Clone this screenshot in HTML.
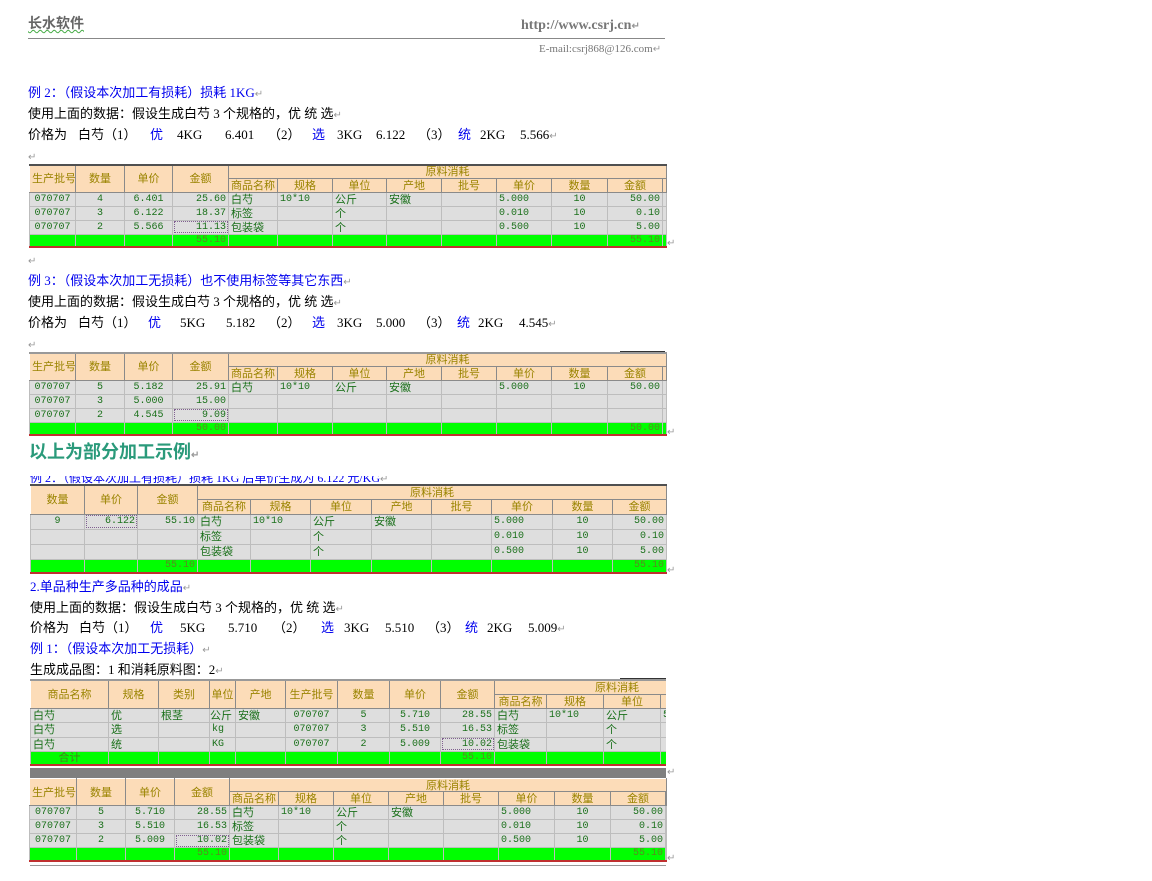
<!DOCTYPE html>
<html><head><meta charset="utf-8">
<style>
body{margin:0;width:1152px;height:881px;background:#fff;position:relative;overflow:hidden;font-family:"Liberation Serif","Noto Sans CJK SC",serif;}
.a{position:absolute;white-space:nowrap;font-size:13px;line-height:15px;color:#000;font-family:"Liberation Serif","Noto Sans CJK SC",serif}
.b{color:#0000ee}
.m{color:#999;font-size:10px}
table.t{position:absolute;border-collapse:collapse;table-layout:fixed;border-top:2px solid #505050;border-bottom:2px solid #c03030;font-family:"Liberation Mono","Noto Sans CJK SC",monospace;font-size:10px;}
table.t td{padding:0 2px;line-height:11px;white-space:nowrap;overflow:hidden;border:1px solid #bdbdbd;}
.h{background:#fcdcb8;color:#9a8400;text-align:center;font-family:"Noto Sans CJK SC",sans-serif;font-size:11px;border-color:#fff #8a8a8a #8a8a8a #fff!important}
.d{background:#dedede;color:#1a701a}
.g{background:#00ff00;color:#5a8a20;text-align:right}
.c{text-align:center}.r{text-align:right}
.s{outline:1px dotted #806090;outline-offset:-2px}
.cj{font-family:"Noto Sans CJK SC",sans-serif;font-size:11px}
</style></head><body>

<div class="a" style="left:28px;top:16px;font-size:14px;color:#666;font-family:'Noto Sans CJK SC',sans-serif;font-weight:bold;text-decoration:underline wavy #4a4;text-decoration-thickness:1px">长水软件</div>
<div class="a" style="left:521px;top:18px;font-size:14px;color:#777;font-weight:bold">http://www.csrj.cn<span class="m">↵</span></div>
<div style="position:absolute;left:28px;top:38px;width:637px;height:1px;background:#888"></div>
<div class="a" style="left:539px;top:42px;font-size:11px;color:#777">E-mail:csrj868@126.com<span class="m">↵</span></div>

<div class="a b" style="left:28px;top:85px">例 2：（假设本次加工有损耗）损耗 1KG<span class="m">↵</span></div>
<div class="a" style="left:28px;top:106px">使用上面的数据：假设生成白芍 3 个规格的，优 统 选<span class="m">↵</span></div>
<div class="a" style="left:28px;top:127px">价格为</div><div class="a" style="left:78px;top:127px">白芍（1）</div><div class="a b" style="left:150px;top:127px">优</div><div class="a" style="left:177px;top:127px">4KG</div><div class="a" style="left:225px;top:127px">6.401</div><div class="a" style="left:268px;top:127px">（2）</div><div class="a b" style="left:312px;top:127px">选</div><div class="a" style="left:337px;top:127px">3KG</div><div class="a" style="left:376px;top:127px">6.122</div><div class="a" style="left:418px;top:127px">（3）</div><div class="a b" style="left:458px;top:127px">统</div><div class="a" style="left:480px;top:127px">2KG</div><div class="a" style="left:520px;top:127px">5.566<span class="m">↵</span></div>
<div class="a m" style="left:28px;top:150px">↵</div>

<table class="t" style="left:29px;top:164px;width:637px">
<colgroup><col style="width:46px"><col style="width:49px"><col style="width:48px"><col style="width:56px"><col style="width:49px"><col style="width:55px"><col style="width:54px"><col style="width:55px"><col style="width:55px"><col style="width:55px"><col style="width:56px"><col style="width:55px"><col style="width:4px"></colgroup>
<tr style="height:13px"><td class="h" rowspan="2">生产批号</td><td class="h" rowspan="2">数量</td><td class="h" rowspan="2">单价</td><td class="h" rowspan="2">金额</td><td class="h" colspan="9">原料消耗</td></tr>
<tr style="height:14px"><td class="h">商品名称</td><td class="h">规格</td><td class="h">单位</td><td class="h">产地</td><td class="h">批号</td><td class="h">单价</td><td class="h">数量</td><td class="h">金额</td><td class="h"></td></tr>
<tr style="height:14px"><td class="d c">070707</td><td class="d c">4</td><td class="d c">6.401</td><td class="d r">25.60</td><td class="d cj">白芍</td><td class="d">10*10</td><td class="d cj">公斤</td><td class="d cj">安徽</td><td class="d"></td><td class="d">5.000</td><td class="d c">10</td><td class="d r">50.00</td><td class="d"></td></tr>
<tr style="height:14px"><td class="d c">070707</td><td class="d c">3</td><td class="d c">6.122</td><td class="d r">18.37</td><td class="d cj">标签</td><td class="d"></td><td class="d cj">个</td><td class="d"></td><td class="d"></td><td class="d">0.010</td><td class="d c">10</td><td class="d r">0.10</td><td class="d"></td></tr>
<tr style="height:14px"><td class="d c">070707</td><td class="d c">2</td><td class="d c">5.566</td><td class="d r s">11.13</td><td class="d cj">包装袋</td><td class="d"></td><td class="d cj">个</td><td class="d"></td><td class="d"></td><td class="d">0.500</td><td class="d c">10</td><td class="d r">5.00</td><td class="d"></td></tr>
<tr style="height:13px"><td class="g"></td><td class="g"></td><td class="g"></td><td class="g">55.10</td><td class="g"></td><td class="g"></td><td class="g"></td><td class="g"></td><td class="g"></td><td class="g"></td><td class="g"></td><td class="g">55.10</td><td class="g"></td></tr>
</table>
<div class="a m" style="left:667px;top:236px">↵</div>

<div class="a m" style="left:28px;top:254px">↵</div>
<div class="a b" style="left:28px;top:273px">例 3：（假设本次加工无损耗）也不使用标签等其它东西<span class="m">↵</span></div>
<div class="a" style="left:28px;top:294px">使用上面的数据：假设生成白芍 3 个规格的，优 统 选<span class="m">↵</span></div>
<div class="a" style="left:28px;top:315px">价格为</div><div class="a" style="left:78px;top:315px">白芍（1）</div><div class="a b" style="left:148px;top:315px">优</div><div class="a" style="left:180px;top:315px">5KG</div><div class="a" style="left:226px;top:315px">5.182</div><div class="a" style="left:268px;top:315px">（2）</div><div class="a b" style="left:312px;top:315px">选</div><div class="a" style="left:337px;top:315px">3KG</div><div class="a" style="left:376px;top:315px">5.000</div><div class="a" style="left:418px;top:315px">（3）</div><div class="a b" style="left:457px;top:315px">统</div><div class="a" style="left:478px;top:315px">2KG</div><div class="a" style="left:519px;top:315px">4.545<span class="m">↵</span></div>
<div class="a m" style="left:28px;top:338px">↵</div>
<div style="position:absolute;left:620px;top:351px;width:45px;height:2px;background:#333"></div>

<table class="t" style="left:29px;top:352px;width:637px;border-top-color:#999">
<colgroup><col style="width:46px"><col style="width:49px"><col style="width:48px"><col style="width:56px"><col style="width:49px"><col style="width:55px"><col style="width:54px"><col style="width:55px"><col style="width:55px"><col style="width:55px"><col style="width:56px"><col style="width:55px"><col style="width:4px"></colgroup>
<tr style="height:13px"><td class="h" rowspan="2">生产批号</td><td class="h" rowspan="2">数量</td><td class="h" rowspan="2">单价</td><td class="h" rowspan="2">金额</td><td class="h" colspan="9">原料消耗</td></tr>
<tr style="height:14px"><td class="h">商品名称</td><td class="h">规格</td><td class="h">单位</td><td class="h">产地</td><td class="h">批号</td><td class="h">单价</td><td class="h">数量</td><td class="h">金额</td><td class="h"></td></tr>
<tr style="height:14px"><td class="d c">070707</td><td class="d c">5</td><td class="d c">5.182</td><td class="d r">25.91</td><td class="d cj">白芍</td><td class="d">10*10</td><td class="d cj">公斤</td><td class="d cj">安徽</td><td class="d"></td><td class="d">5.000</td><td class="d c">10</td><td class="d r">50.00</td><td class="d"></td></tr>
<tr style="height:14px"><td class="d c">070707</td><td class="d c">3</td><td class="d c">5.000</td><td class="d r">15.00</td><td class="d"></td><td class="d"></td><td class="d"></td><td class="d"></td><td class="d"></td><td class="d"></td><td class="d"></td><td class="d"></td><td class="d"></td></tr>
<tr style="height:14px"><td class="d c">070707</td><td class="d c">2</td><td class="d c">4.545</td><td class="d r s">9.09</td><td class="d"></td><td class="d"></td><td class="d"></td><td class="d"></td><td class="d"></td><td class="d"></td><td class="d"></td><td class="d"></td><td class="d"></td></tr>
<tr style="height:13px"><td class="g"></td><td class="g"></td><td class="g"></td><td class="g">50.00</td><td class="g"></td><td class="g"></td><td class="g"></td><td class="g"></td><td class="g"></td><td class="g"></td><td class="g"></td><td class="g">50.00</td><td class="g"></td></tr>
</table>
<div class="a m" style="left:667px;top:425px">↵</div>

<div class="a" style="left:29px;top:440px;font-size:18px;line-height:22px;font-weight:bold;color:#2a9a7a;font-family:'Noto Sans CJK SC',sans-serif">以上为部分加工示例<span class="m">↵</span></div>
<div style="position:absolute;left:30px;top:476px;width:440px;height:8px;overflow:hidden"><div class="a b" style="left:0;top:-5px;font-size:12px">例 2：（假设本次加工有损耗）损耗 1KG 后单价生成为 6.122 元/KG<span class="m">↵</span></div></div>

<table class="t" style="left:30px;top:484px;width:636px;border-bottom-color:#c03030">
<colgroup><col style="width:54px"><col style="width:53px"><col style="width:60px"><col style="width:53px"><col style="width:60px"><col style="width:61px"><col style="width:60px"><col style="width:60px"><col style="width:61px"><col style="width:60px"><col style="width:54px"></colgroup>
<tr style="height:14px"><td class="h" rowspan="2">数量</td><td class="h" rowspan="2">单价</td><td class="h" rowspan="2">金额</td><td class="h" colspan="8">原料消耗</td></tr>
<tr style="height:15px"><td class="h">商品名称</td><td class="h">规格</td><td class="h">单位</td><td class="h">产地</td><td class="h">批号</td><td class="h">单价</td><td class="h">数量</td><td class="h">金额</td></tr>
<tr style="height:15px"><td class="d c">9</td><td class="d r s">6.122</td><td class="d r">55.10</td><td class="d cj">白芍</td><td class="d">10*10</td><td class="d cj">公斤</td><td class="d cj">安徽</td><td class="d"></td><td class="d">5.000</td><td class="d c">10</td><td class="d r">50.00</td></tr>
<tr style="height:15px"><td class="d"></td><td class="d"></td><td class="d"></td><td class="d cj">标签</td><td class="d"></td><td class="d cj">个</td><td class="d"></td><td class="d"></td><td class="d">0.010</td><td class="d c">10</td><td class="d r">0.10</td></tr>
<tr style="height:15px"><td class="d"></td><td class="d"></td><td class="d"></td><td class="d cj">包装袋</td><td class="d"></td><td class="d cj">个</td><td class="d"></td><td class="d"></td><td class="d">0.500</td><td class="d c">10</td><td class="d r">5.00</td></tr>
<tr style="height:14px"><td class="g"></td><td class="g"></td><td class="g">55.10</td><td class="g"></td><td class="g"></td><td class="g"></td><td class="g"></td><td class="g"></td><td class="g"></td><td class="g"></td><td class="g">55.10</td></tr>
</table>
<div class="a m" style="left:667px;top:563px">↵</div>

<div class="a b" style="left:30px;top:579px">2.单品种生产多品种的成品<span class="m">↵</span></div>
<div class="a" style="left:30px;top:600px">使用上面的数据：假设生成白芍 3 个规格的，优 统 选<span class="m">↵</span></div>
<div class="a" style="left:30px;top:620px">价格为</div><div class="a" style="left:79px;top:620px">白芍（1）</div><div class="a b" style="left:150px;top:620px">优</div><div class="a" style="left:180px;top:620px">5KG</div><div class="a" style="left:228px;top:620px">5.710</div><div class="a" style="left:273px;top:620px">（2）</div><div class="a b" style="left:321px;top:620px">选</div><div class="a" style="left:344px;top:620px">3KG</div><div class="a" style="left:385px;top:620px">5.510</div><div class="a" style="left:427px;top:620px">（3）</div><div class="a b" style="left:465px;top:620px">统</div><div class="a" style="left:487px;top:620px">2KG</div><div class="a" style="left:528px;top:620px">5.009<span class="m">↵</span></div>
<div class="a b" style="left:30px;top:641px">例 1：（假设本次加工无损耗）<span class="m">↵</span></div>
<div class="a" style="left:30px;top:662px">生成成品图：1 和消耗原料图：2<span class="m">↵</span></div>
<div style="position:absolute;left:620px;top:678px;width:46px;height:2px;background:#333"></div>

<div style="position:absolute;left:30px;top:679px;width:636px;height:89px;overflow:hidden">
<table class="t" style="left:0;top:0;width:700px;border-top-color:#999">
<colgroup><col style="width:78px"><col style="width:50px"><col style="width:51px"><col style="width:26px"><col style="width:50px"><col style="width:52px"><col style="width:52px"><col style="width:51px"><col style="width:54px"><col style="width:52px"><col style="width:57px"><col style="width:57px"><col style="width:70px"></colgroup>
<tr style="height:14px"><td class="h" rowspan="2">商品名称</td><td class="h" rowspan="2">规格</td><td class="h" rowspan="2">类别</td><td class="h" rowspan="2" style="padding:0">单位</td><td class="h" rowspan="2">产地</td><td class="h" rowspan="2" style="padding:0">生产批号</td><td class="h" rowspan="2">数量</td><td class="h" rowspan="2">单价</td><td class="h" rowspan="2">金额</td><td class="h" colspan="4" style="text-align:left;padding-left:100px">原料消耗</td></tr>
<tr style="height:14px"><td class="h">商品名称</td><td class="h">规格</td><td class="h">单位</td><td class="h"></td></tr>
<tr style="height:14px"><td class="d cj">白芍</td><td class="d cj">优</td><td class="d cj">根茎</td><td class="d cj" style="padding:0">公斤</td><td class="d cj">安徽</td><td class="d c">070707</td><td class="d c">5</td><td class="d c">5.710</td><td class="d r">28.55</td><td class="d cj">白芍</td><td class="d">10*10</td><td class="d cj">公斤</td><td class="d">5</td></tr>
<tr style="height:15px"><td class="d cj">白芍</td><td class="d cj">选</td><td class="d"></td><td class="d">kg</td><td class="d"></td><td class="d c">070707</td><td class="d c">3</td><td class="d c">5.510</td><td class="d r">16.53</td><td class="d cj">标签</td><td class="d"></td><td class="d cj">个</td><td class="d"></td></tr>
<tr style="height:14px"><td class="d cj">白芍</td><td class="d cj">统</td><td class="d"></td><td class="d">KG</td><td class="d"></td><td class="d c">070707</td><td class="d c">2</td><td class="d c">5.009</td><td class="d r s">10.02</td><td class="d cj">包装袋</td><td class="d"></td><td class="d cj">个</td><td class="d"></td></tr>
<tr style="height:14px"><td class="g c cj" style="text-align:center;color:#4a7a20">合计</td><td class="g"></td><td class="g"></td><td class="g"></td><td class="g"></td><td class="g"></td><td class="g"></td><td class="g"></td><td class="g">55.10</td><td class="g"></td><td class="g"></td><td class="g"></td><td class="g"></td></tr>
</table></div>
<div style="position:absolute;left:30px;top:768px;width:636px;height:10px;background:#7f7f7f"></div>
<div class="a m" style="left:667px;top:765px">↵</div>

<table class="t" style="left:29px;top:778px;width:637px;border-top:1px solid #aaa">
<colgroup><col style="width:47px"><col style="width:49px"><col style="width:49px"><col style="width:55px"><col style="width:49px"><col style="width:55px"><col style="width:55px"><col style="width:55px"><col style="width:55px"><col style="width:56px"><col style="width:56px"><col style="width:55px"><col style="width:1px"></colgroup>
<tr style="height:13px"><td class="h" rowspan="2">生产批号</td><td class="h" rowspan="2">数量</td><td class="h" rowspan="2">单价</td><td class="h" rowspan="2">金额</td><td class="h" colspan="9">原料消耗</td></tr>
<tr style="height:14px"><td class="h">商品名称</td><td class="h">规格</td><td class="h">单位</td><td class="h">产地</td><td class="h">批号</td><td class="h">单价</td><td class="h">数量</td><td class="h">金额</td><td class="h"></td></tr>
<tr style="height:14px"><td class="d c">070707</td><td class="d c">5</td><td class="d c">5.710</td><td class="d r">28.55</td><td class="d cj">白芍</td><td class="d">10*10</td><td class="d cj">公斤</td><td class="d cj">安徽</td><td class="d"></td><td class="d">5.000</td><td class="d c">10</td><td class="d r">50.00</td><td class="d"></td></tr>
<tr style="height:14px"><td class="d c">070707</td><td class="d c">3</td><td class="d c">5.510</td><td class="d r">16.53</td><td class="d cj">标签</td><td class="d"></td><td class="d cj">个</td><td class="d"></td><td class="d"></td><td class="d">0.010</td><td class="d c">10</td><td class="d r">0.10</td><td class="d"></td></tr>
<tr style="height:14px"><td class="d c">070707</td><td class="d c">2</td><td class="d c">5.009</td><td class="d r s">10.02</td><td class="d cj">包装袋</td><td class="d"></td><td class="d cj">个</td><td class="d"></td><td class="d"></td><td class="d">0.500</td><td class="d c">10</td><td class="d r">5.00</td><td class="d"></td></tr>
<tr style="height:13px"><td class="g"></td><td class="g"></td><td class="g"></td><td class="g">55.10</td><td class="g"></td><td class="g"></td><td class="g"></td><td class="g"></td><td class="g"></td><td class="g"></td><td class="g"></td><td class="g">55.10</td><td class="g"></td></tr>
</table>
<div class="a m" style="left:667px;top:851px">↵</div>
<div style="position:absolute;left:30px;top:865px;width:636px;height:1px;background:#999"></div>
</body></html>
